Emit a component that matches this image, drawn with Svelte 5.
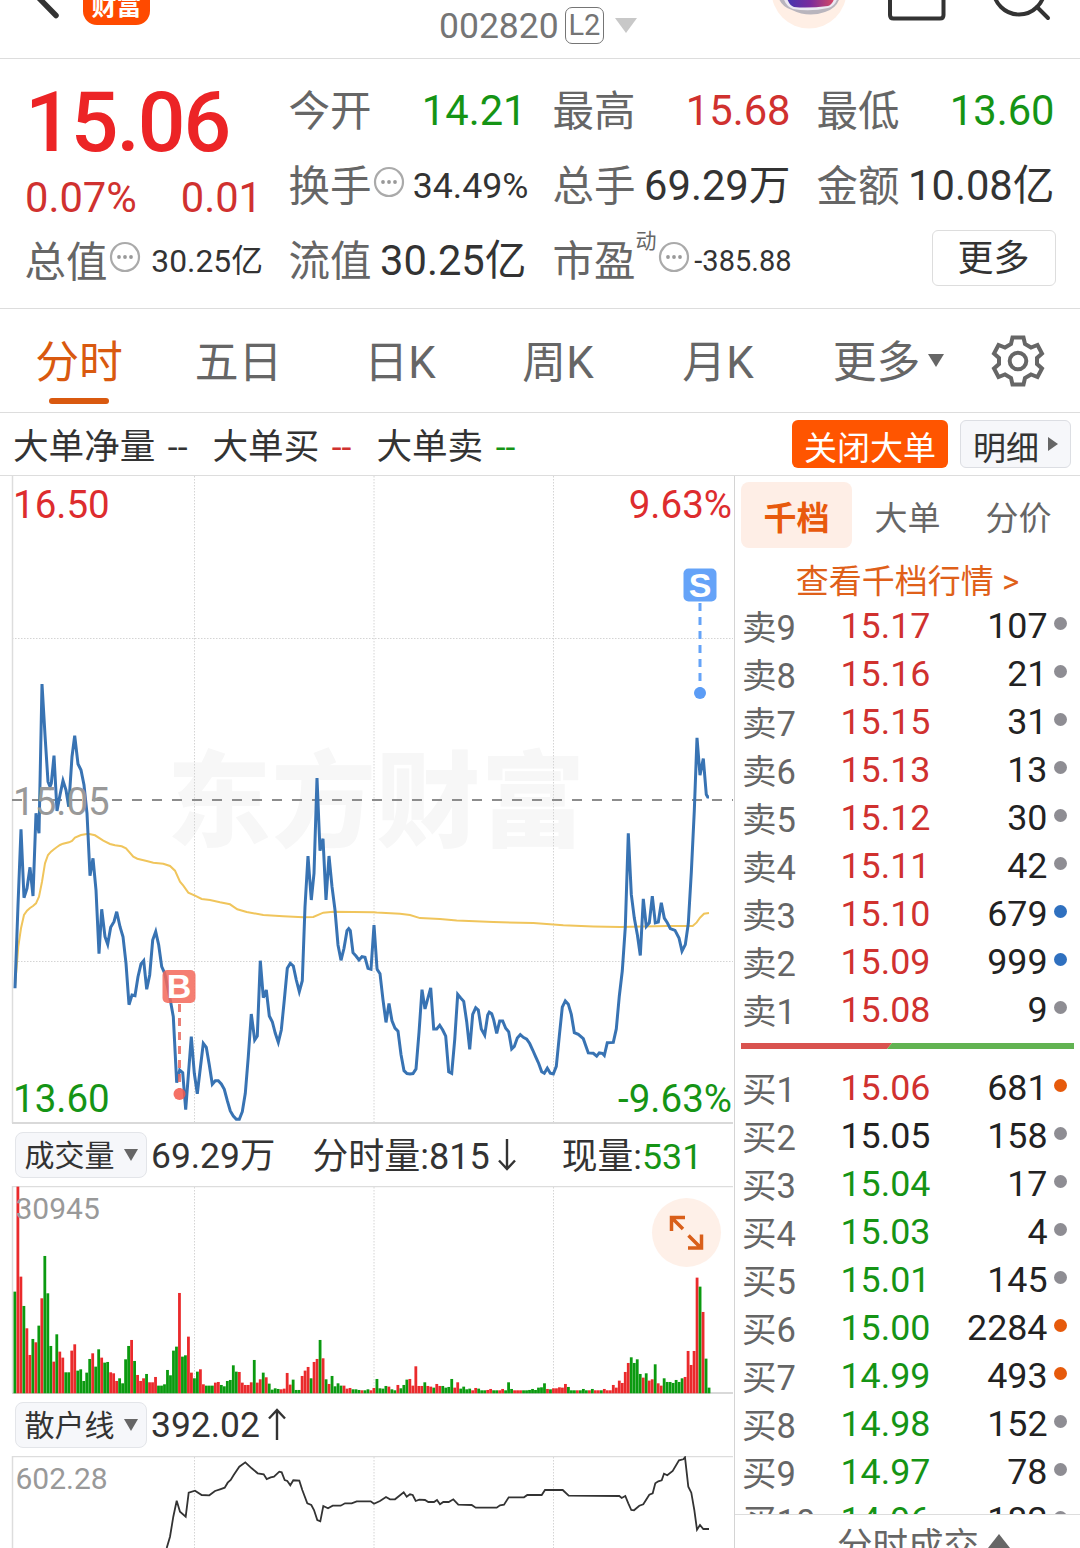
<script>
	const asks = [
		['卖9', '15.17', 107, 'gray'],
		['卖8', '15.16', 21, 'gray'],
		['卖7', '15.15', 31, 'gray'],
		['卖6', '15.13', 13, 'gray'],
		['卖5', '15.12', 30, 'gray'],
		['卖4', '15.11', 42, 'gray'],
		['卖3', '15.10', 679, 'blue'],
		['卖2', '15.09', 999, 'blue'],
		['卖1', '15.08', 9, 'gray']
	];
	const bids = [
		['买1', '15.06', 681, 'orange'],
		['买2', '15.05', 158, 'gray'],
		['买3', '15.04', 17, 'gray'],
		['买4', '15.03', 4, 'gray'],
		['买5', '15.01', 145, 'gray'],
		['买6', '15.00', 2284, 'orange'],
		['买7', '14.99', 493, 'orange'],
		['买8', '14.98', 152, 'gray'],
		['买9', '14.97', 78, 'gray'],
		['买10', '14.96', 182, 'gray']
	];
	const preClose = 15.05;

	function tone(price) {
		const p = Number(price);
		if (p > preClose) return 'up';
		if (p < preClose) return 'down';
		return 'flat';
	}

	// Scale a raw "x,y x,y" trace into chart coordinates
	function trace(raw, x0, y0, ky) {
		return raw
			.split(' ')
			.map((p) => {
				const [x, y] = p.split(',').map(Number);
				return (x0 + x / 3).toFixed(1) + ',' + (y0 + y / ky).toFixed(1);
			})
			.join(' ');
	}

	const priceAm =
		'45,1045 54,795 63,568 72,773 81,745 90,682 99,768 108,520 117,580 126,132 135,285 144,425 150,440 154,430 162,347 171,513 180,465 189,422 198,450 206,500 216,350 224,287 234,372 243,390 252,435 261,520 270,707 279,655 288,750 297,941 305,808 315,890 323,913 332,862 342,845 350,815 360,860 369,890 378,970 387,1094 396,1065 405,1067 414,1010 423,972 431,962 440,1048 449,1005 458,900 467,875 476,915 485,980 494,1000 511,1080 520,1130 530,1328 539,1290 548,1298 557,1409 574,1190 583,1300 592,1361 601,1285 610,1210 619,1222 628,1275 637,1333 646,1322 655,1322 664,1332 673,1348 682,1382 691,1413 700,1428 709,1438 718,1438 727,1415 736,1360 745,1250 754,1122 764,1200 772,1188 781,962 790,1073 799,1050 808,1128 817,1145 826,1180 835,1207 844,1170 853,1080 862,985 871,970 880,978 889,1020 898,1055 907,1022 915,800 924,648 934,780 942,700 951,414 960,632 969,596 978,780 987,648 996,740 1005,810 1014,915 1023,961 1032,925 1041,872 1046,866 1051,872 1059,938 1068,948 1077,960 1086,950 1095,952 1104,985 1113,988 1122,855 1131,985';
	const pricePm =
		'52,1127 60,1138 69,1210 78,1272 87,1220 96,1268 105,1288 114,1296 123,1360 132,1405 141,1413 150,1414 159,1413 168,1400 177,1300 186,1182 195,1235 212,1177 221,1290 230,1290 239,1280 248,1293 257,1310 266,1408 275,1412 284,1320 293,1195 302,1205 311,1214 320,1270 329,1346 338,1250 347,1232 355,1238 364,1290 374,1307 383,1252 388,1244 395,1248 401,1265 410,1302 419,1268 428,1268 437,1288 446,1298 455,1345 463,1338 472,1315 481,1306 490,1313 500,1318 509,1330 518,1348 527,1367 536,1385 545,1408 553,1412 562,1398 571,1412 580,1414 589,1393 598,1310 607,1230 616,1213 625,1222 634,1250 643,1300 655,1305 670,1317 685,1356 700,1357 710,1365 718,1356 727,1357 733,1363 742,1328 760,1327 769,1290 778,1200 787,1130 796,1010 805,752 814,920 823,985 832,1030 841,1088 850,932 859,1008 868,998 877,925 886,998 895,996 904,943 913,985 922,998 931,1014 945,1019 957,1040 966,1076 976,1058 985,1000 994,860 1003,690 1011,489 1020,592 1030,546 1039,645 1043,652 1047,652';
	const avgAm =
		'45,1040 55,920 63,865 72,825 81,812 90,804 99,798 108,790 117,770 126,725 135,670 144,645 153,635 162,628 171,621 180,615 189,611 207,607 216,603 225,593 243,585 265,581 285,586 310,602 330,612 345,616 365,619 378,625 400,650 412,656 440,663 460,668 490,671 510,678 525,692 540,725 550,737 565,758 585,767 605,777 630,780 660,787 690,793 712,808 740,816 790,825 850,829 910,832 940,831 970,818 1000,815 1120,817';
	const avgPm =
		'50,970 120,973 150,977 180,985 240,988 290,992 400,996 520,999 610,1005 700,1008 780,1010 850,1008 920,1007 998,1007 1010,997 1020,984 1032,973 1047,971';
	const retailAm =
		'500,1284 510,1250 520,1190 530,1142 540,1175 557,1190 566,1118 585,1112 605,1125 628,1126 645,1113 660,1108 674,1103 683,1088 692,1080 701,1065 718,1040 736,1027 755,1045 773,1060 791,1063 800,1077 812,1072 822,1070 838,1055 845,1057 854,1080 862,1083 871,1096 880,1081 898,1082 907,1110 922,1150 934,1155 942,1170 952,1200 961,1204 970,1158 984,1165 998,1157 1022,1157 1035,1150 1055,1150 1070,1144 1080,1144';
	const retailPm =
		'32,1144 42,1151 60,1143 78,1131 90,1138 105,1138 131,1117 140,1130 150,1123 158,1125 167,1143 178,1139 195,1140 205,1146 222,1146 231,1140 240,1153 250,1146 266,1146 280,1138 295,1154 335,1155 347,1163 410,1163 420,1156 432,1154 446,1132 492,1132 502,1125 545,1125 555,1110 608,1110 626,1127 778,1128 785,1134 796,1128 805,1150 814,1170 822,1171 838,1157 850,1153 868,1124 878,1120 886,1090 895,1084 905,1081 912,1061 922,1066 938,1053 957,1021 970,1018 975,1012 985,1100 994,1118 1003,1170 1011,1229 1020,1215 1030,1227 1047,1227';

	const priceLine = trace(priceAm, 0, 640, 3) + ' ' + trace(pricePm, 360, 560, 2.751);
	const avgLine = trace(avgAm, 0, 640, 3) + ' ' + trace(avgPm, 360, 560, 2.751);
	const retailLine = trace(retailAm, 0, 1120, 3) + ' ' + trace(retailPm, 360, 1120, 3);

	// one bar per minute, r = rising, g = falling
	const volumes =
		'g305 r620 r350 g262 r195 r115 g163 r153 g203 r285 g412 g300 g142 r95 g177 r125 r107 g63 g63 r128 r147 g68 g72 g37 g62 g103 r120 g80 g132 r107 g92 g94 r63 r60 r37 g45 g30 g102 g142 r160 g97 r55 r37 r45 g58 r33 r33 r49 g23 g23 g27 g70 g54 g128 g140 r301 g110 g114 r170 r62 g45 g65 r72 r27 g23 g23 g23 r32 r34 g25 g21 g37 g40 g84 g65 r64 r32 r25 r25 r33 g100 r32 r42 g62 r48 g29 g11 g15 g13 r12 r14 r61 r26 g41 g10 g10 r52 r68 r79 g45 r94 r103 g160 r105 g42 r28 g52 g21 g30 g23 r23 r14 r16 g12 g12 g10 r9 g9 g12 ' +
		'r9 r16 g43 g15 g14 g22 r20 g12 g9 r25 g15 g25 g41 r43 r23 r81 r22 r22 g33 r22 r20 g17 r28 r22 g22 g17 g19 g43 r17 r33 g14 g20 g12 g14 r9 r16 g14 g9 g9 r10 r13 g9 g9 r9 r13 g9 g33 g13 r9 r9 r9 g9 g9 g10 g13 g10 g17 g18 g30 r13 g12 r15 r15 r18 r17 r28 g19 g9 g9 r9 g9 g13 g9 r9 g13 r9 r9 g9 r13 r9 r9 r25 r17 r38 r31 r64 r91 g108 g91 g102 g58 r47 g60 r38 r42 g87 r30 r23 g45 g34 g34 g31 g40 g34 g45 r49 r127 r85 r127 r347 g320 r244 g104 g17';
	const bars = volumes.split(' ').map((v, i) => ({
		x: 13.5 + i * 2.992,
		h: Number(v.slice(1)) / 3,
		color: v[0] === 'r' ? '#ea2a2c' : '#0b9a10'
	}));

	const gridX = [194.5, 374, 553.5];
</script>

{#snippet info()}
	<svg class="info" width="32" height="32" viewBox="0 0 32 32">
		<circle cx="16" cy="16" r="14" fill="none" stroke="#aaa" stroke-width="2.2" />
		<circle cx="10" cy="16" r="1.9" fill="#999" />
		<circle cx="16" cy="16" r="1.9" fill="#999" />
		<circle cx="22" cy="16" r="1.9" fill="#999" />
	</svg>
{/snippet}

{#snippet row([label, price, qty, dot])}
	<div class="row">
		<span class="label">{label}</span>
		<span class="price {tone(price)}">{price}</span>
		<span class="qty">{qty}</span>
		<i class="dot {dot}"></i>
	</div>
{/snippet}

<div class="page">
	<header>
		<div class="left">
			<svg width="83" height="58" viewBox="0 0 83 58">
				<path d="M33-8 56 15.500" fill="none" stroke="#333" stroke-width="5.500" stroke-linecap="round" />
			</svg>
			<div class="logo">财富</div>
		</div>
		<div class="code">
			<span>002820</span>
			<span class="level">L2</span>
			<svg width="22" height="16" viewBox="0 0 22 16"><path d="M0 0h22L11 15z" fill="#c8c8c8" /></svg>
		</div>
		<svg class="actions" width="443" height="58" viewBox="637 0 443 58">
			<defs>
				<linearGradient id="visor" x1="0" x2="1" y1="0" y2="0">
					<stop offset="0" stop-color="#4136b0" />
					<stop offset="0.5" stop-color="#7a2a9c" />
					<stop offset="1" stop-color="#d94a62" />
				</linearGradient>
			</defs>
			<circle cx="809" cy="-9" r="37.500" fill="#ffefe5" />
			<path d="M778-4Q781 7 792 10Q808 18 825 12Q838 8 840-4z" fill="#b9b5bd" />
			<path d="M783-4Q785 6 793 9Q810 12 828 8Q836 6 838-4z" fill="#ece9f2" />
			<path d="M786-6Q788 5 794 7Q808 8.500 828 6Q834 4 835-6z" fill="url(#visor)" />
			<path d="M890-6V15q0 3.500 3.500 3.500h46.500q3.500 0 3.500-3.500V-6" fill="none" stroke="#333" stroke-width="4" />
			<circle cx="1019" cy="-11" r="25.500" fill="none" stroke="#333" stroke-width="4" />
			<path d="M1037 7 1048 18" stroke="#333" stroke-width="4" stroke-linecap="round" />
		</svg>
	</header>

	<section class="quote">
		<div class="last">
			<div class="big">15.06</div>
			<div class="pair change"><span>0.07%</span><span>0.01</span></div>
			<div class="pair cap"><span class="name">总值{@render info()}</span><span class="small">30.25亿</span></div>
		</div>
		<div class="grid">
			<div class="pair"><span class="name">今开</span><span class="down">14.21</span></div>
			<div class="pair"><span class="name">最高</span><span class="up">15.68</span></div>
			<div class="pair"><span class="name">最低</span><span class="down">13.60</span></div>
			<div class="pair"><span class="name">换手{@render info()}</span><span class="mid">34.49%</span></div>
			<div class="pair"><span class="name">总手</span><span>69.29万</span></div>
			<div class="pair"><span class="name">金额</span><span>10.08亿</span></div>
			<div class="pair"><span class="name">流值</span><span>30.25亿</span></div>
			<div class="pair"><span class="name">市盈<sup>动</sup>{@render info()}</span><span class="tiny">-385.88</span></div>
			<div class="pair end"><button class="more">更多</button></div>
		</div>
	</section>

	<nav>
		<span class="active">分时</span>
		<span>五日</span>
		<span>日K</span>
		<span>周K</span>
		<span>月K</span>
		<span>更多<svg class="caret" width="16" height="13" viewBox="0 0 16 13"><path d="M0 0h16L8 13z" fill="#666" /></svg></span>
		<svg class="gear" width="54" height="54" viewBox="-27 -27 54 54" fill="none" stroke="#666" stroke-width="4">
			<path d="M-5.500-23.500H5.500L7-17L13-13.500L19.500-16L24-7.500L19-3V3L24 7.500L19.500 16L13 13.500L7 17L5.500 23.500H-5.500L-7 17L-13 13.500L-19.500 16L-24 7.500L-19 3V-3L-24-7.500L-19.500-16L-13-13.500L-7-17z" />
			<circle r="8.300" />
		</svg>
	</nav>

	<div class="orders">
		<span>大单净量 <b>--</b></span>
		<span>大单买 <b class="up">--</b></span>
		<span>大单卖 <b class="down">--</b></span>
		<button class="close">关闭大单</button>
		<button class="detail">明细<svg width="10" height="14" viewBox="0 0 10 14"><path d="M0 0 10 7 0 14z" fill="#666" /></svg></button>
	</div>

	<main>
		<div class="charts">
			<svg width="734" height="648" viewBox="0 476 734 648">
				<text class="mark" x="167" y="839" textLength="418">东方财富</text>
				<g class="grid-lines">
					{#each gridX as x}
						<line x1={x} x2={x} y1="476" y2="1123" />
					{/each}
					<line x1="12" x2="733" y1="638.5" y2="638.5" />
					<line x1="12" x2="733" y1="961.5" y2="961.5" />
				</g>
				<path d="M12.500 476V1123" stroke="#ddd" stroke-width="1.500" />
				<path d="M12 1123H733" stroke="#d9d9d9" stroke-width="2" />
				<path d="M12 800H733" stroke="#8c8c8c" stroke-width="2" stroke-dasharray="10 10" />
				<polyline points={avgLine} fill="none" stroke="#f0c55c" stroke-width="2" />
				<polyline points={priceLine} fill="none" stroke="#3873b3" stroke-width="3" />
				<text class="axis up" x="13" y="518">16.50</text>
				<text class="axis up" x="732" y="518" text-anchor="end">9.63%</text>
				<text class="axis muted" x="13" y="815">15.05</text>
				<text class="axis down" x="13" y="1112">13.60</text>
				<text class="axis down" x="732" y="1112" text-anchor="end">-9.63%</text>
				<g opacity="0.85">
					<rect x="162.500" y="970" width="33" height="33" rx="5" fill="#f4685a" />
					<path d="M179.500 1004V1092" stroke="#e8695f" stroke-width="3" stroke-dasharray="8 6" />
					<circle cx="179.500" cy="1094" r="6" fill="#f4594c" />
				</g>
				<text class="flag" x="179" y="998">B</text>
				<rect x="683.500" y="568.500" width="33" height="33" rx="5" fill="#65a3f8" />
				<path d="M700 603V692" stroke="#65a3f8" stroke-width="3" stroke-dasharray="8 6" />
				<circle cx="700" cy="693" r="6" fill="#5b9cf5" />
				<text class="flag" x="700" y="597">S</text>
			</svg>

			<div class="toolbar">
				<button class="pill">成交量<svg width="14" height="12" viewBox="0 0 14 12"><path d="M0 0h14L7 12z" fill="#666" /></svg></button>
				<span class="value cjk">69.29万</span>
				<span class="minute cjk">分时量:815<svg width="24" height="34" viewBox="0 0 24 34"><path d="M10 1V31M2 22.500 10 31 18 22.500" fill="none" stroke="#333" stroke-width="2.400" /></svg></span>
				<span class="now cjk">现量:<em class="down">531</em></span>
			</div>

			<svg width="734" height="208" viewBox="0 1186 734 208">
				<g class="grid-lines">
					{#each gridX as x}
						<line x1={x} x2={x} y1="1187" y2="1393" />
					{/each}
				</g>
				<path d="M12.500 1393V1186.500H733" fill="none" stroke="#ddd" stroke-width="1.500" />
				<path d="M12 1393H733" stroke="#d9d9d9" stroke-width="2" />
				{#each bars as b}
					<rect x={b.x} y={1393.3 - b.h} width="2.800" height={b.h} fill={b.color} />
				{/each}
				<text class="axis muted note" x="15.500" y="1219">30945</text>
				<circle cx="686.500" cy="1232.500" r="34.500" fill="#fef0e8" />
				<path d="M671.500 1231V1217.500H685M672 1218 683 1229M688.500 1235.500 701 1248M688 1248H701.500V1234.500" fill="none" stroke="#d95f1a" stroke-width="3.500" />
			</svg>

			<div class="toolbar second">
				<button class="pill">散户线<svg width="14" height="12" viewBox="0 0 14 12"><path d="M0 0h14L7 12z" fill="#666" /></svg></button>
				<span class="value">392.02<svg class="rise" width="26" height="34" viewBox="0 0 26 34"><path d="M16 32V2M8 10.500 16 2 24 10.500" fill="none" stroke="#333" stroke-width="2.400" /></svg></span>
			</div>

			<svg width="734" height="92" viewBox="0 1456 734 92">
				<g class="grid-lines">
					{#each gridX as x}
						<line x1={x} x2={x} y1="1457" y2="1548" />
					{/each}
				</g>
				<path d="M12.500 1548V1456.500H733" fill="none" stroke="#ddd" stroke-width="1.500" />
				<polyline points={retailLine} fill="none" stroke="#333" stroke-width="1.800" />
				<text class="axis muted note" x="15.500" y="1489">602.28</text>
			</svg>
		</div>

		<aside>
			<div class="book-tabs">
				<span class="active">千档</span>
				<span>大单</span>
				<span>分价</span>
			</div>
			<div class="link">查看千档行情 &gt;</div>
			{#each asks as item}
				{@render row(item)}
			{/each}
			<svg class="ratio" width="333" height="6" viewBox="0 0 333 6">
				<path d="M0 0H151L146 6H0z" fill="#d9534f" />
				<path d="M151 0H333V6H146z" fill="#62b352" />
			</svg>
			<div class="bids">
				{#each bids as item}
					{@render row(item)}
				{/each}
			</div>
			<div class="footer">分时成交<svg width="22" height="14" viewBox="0 0 22 14"><path d="M0 14h22L11 0z" fill="#666" /></svg></div>
		</aside>
	</main>
</div>

<style>
	:global(body) {
		margin: 0;
		background: #fff;
	}

	.page {
		width: 1080px;
		height: 1548px;
		overflow: hidden;
		display: flex;
		flex-direction: column;
		background: #fff;
		color: #333;
		font-family: Roboto, 'Noto Sans CJK SC', sans-serif;
		white-space: nowrap;
	}

	svg {
		display: block;
		flex: none;
	}

	button {
		padding: 0;
		font: inherit;
		color: inherit;
		box-sizing: border-box;
		display: flex;
		align-items: center;
		justify-content: center;
	}

	.up {
		color: #d0312f;
		fill: #dd2c2e;
	}

	.down {
		color: #159415;
		fill: #159415;
	}

	header {
		height: 58px;
		flex: none;
		display: grid;
		grid-template-columns: 439px 198px 443px;
		overflow: hidden;
		border-bottom: 1px solid #ddd;
	}

	.left {
		display: flex;
		height: 58px;
	}

	.logo {
		width: 67px;
		height: 67px;
		margin-top: -42px;
		border-radius: 14px;
		background: #ff4a00;
		color: #fff;
		font-size: 25px;
		font-weight: 700;
		line-height: 26px;
		text-align: center;
		padding-top: 36px;
		box-sizing: border-box;
	}

	.code {
		display: flex;
		align-items: center;
		height: 51px;
		font-size: 35.5px;
		color: #757575;
	}

	.level {
		width: 40px;
		height: 37px;
		margin: 0 11px 0 6px;
		box-sizing: border-box;
		border: 1.5px solid #757575;
		border-radius: 7px;
		font-size: 29px;
		line-height: 35px;
		text-align: center;
	}

	.quote {
		height: 249px;
		flex: none;
		box-sizing: content-box;
		border-bottom: 1px solid #ddd;
		padding: 0 24px 0 25px;
		display: flex;
		gap: 27px;
		font-size: 41.7px;
	}

	.last {
		width: 237px;
		padding-top: 23px;
	}

	.big {
		font-size: 84px;
		font-weight: 500;
		line-height: 82px;
		letter-spacing: -2px;
		color: #ec2426;
	}

	.change {
		height: 68px;
		color: #d0312f;
	}

	.cap {
		height: 58px;
	}

	.grid {
		flex: 1;
		padding-top: 14px;
		display: grid;
		grid-template-columns: repeat(3, 237.5px);
		grid-auto-rows: 75px;
		column-gap: 26.5px;
		align-content: start;
	}

	.pair {
		display: flex;
		align-items: center;
		justify-content: space-between;
		line-height: 50px;
	}

	.pair.end {
		justify-content: flex-end;
	}

	.name {
		display: flex;
		align-items: center;
		margin: 3px 0 0 -0.5px;
		font-size: 41.5px;
		color: #666;
	}

	.info {
		margin: -11px 0 0 1px;
	}

	sup {
		font-size: 21px;
		line-height: 22px;
		margin: -43px 0 0 0;
	}

	.mid {
		margin-right: -2px;
		font-size: 35.7px;
	}

	.small {
		margin-right: -1px;
		font-size: 31.8px;
	}

	.tiny {
		margin-right: -1px;
		font-size: 29px;
	}

	.more {
		width: 124px;
		height: 56px;
		margin: -5px -1px 0 0;
		padding-top: 1px;
		background: #fff;
		border: 1px solid #ddd;
		border-radius: 6px;
		font-size: 36px;
	}

	nav {
		height: 103px;
		flex: none;
		display: grid;
		grid-template-columns: 158px 161px 162px 154px 166px 175px 84px;
		align-items: center;
		justify-items: center;
		border-bottom: 1px solid #ddd;
		font-size: 43.8px;
		color: #666;
	}

	nav span {
		height: 103px;
		line-height: 103px;
		padding-top: 5px;
		box-sizing: border-box;
		position: relative;
		display: flex;
		align-items: center;
	}

	nav .active {
		color: #d9590f;
	}

	nav .active::after {
		content: '';
		position: absolute;
		left: 14px;
		bottom: 8px;
		width: 60px;
		height: 6px;
		border-radius: 3px;
		background: #d9590f;
	}

	.caret {
		margin: -5px 0 0 8px;
	}

	.orders {
		height: 62px;
		flex: none;
		display: flex;
		align-items: center;
		padding: 0 9px 0 13px;
		border-bottom: 1px solid #ddd;
		font-size: 35.6px;
	}

	.orders span {
		margin: -2px 25px 0 0;
		display: flex;
		align-items: baseline;
		gap: 12.5px;
	}

	.orders b {
		font-weight: 400;
	}

	.close {
		width: 156px;
		height: 48px;
		margin-left: auto;
		padding-top: 3px;
		border: 0;
		border-radius: 6px;
		background: #ff5500;
		color: #fff;
		font-size: 33px;
	}

	.detail {
		width: 111px;
		height: 48px;
		margin-left: 12px;
		padding-top: 3px;
		border: 1px solid #dcdee3;
		border-radius: 6px;
		background: #f6f7fa;
		font-size: 33px;
		gap: 9px;
	}

	.detail svg {
		margin-top: -4px;
	}

	main {
		flex: 1;
		min-height: 0;
		display: flex;
	}

	.charts {
		width: 734px;
		flex: none;
	}

	.grid-lines line {
		stroke: #d4d4d4;
		stroke-width: 1;
		stroke-dasharray: 1.5 1.5;
	}

	.mark {
		font-family: 'Noto Sans CJK SC', sans-serif;
		font-size: 104px;
		font-weight: 900;
		fill: #f7f7f7;
	}

	.axis {
		font-size: 38.5px;
	}

	.muted {
		fill: #999;
	}

	.note {
		font-size: 30px;
	}

	.flag {
		font-family: 'Liberation Sans', sans-serif;
		font-size: 34px;
		font-weight: 700;
		fill: #fff;
		text-anchor: middle;
	}

	.toolbar {
		height: 62px;
		box-sizing: border-box;
		padding-left: 15px;
		display: flex;
		align-items: center;
		font-size: 35.4px;
	}

	.toolbar span {
		display: flex;
		align-items: center;
	}

	.toolbar .cjk {
		align-items: baseline;
		margin-top: -5px;
	}

	.pill {
		width: 132px;
		height: 46px;
		padding-bottom: 5px;
		border: 1px solid #e3e5e9;
		border-radius: 8px;
		background: #f6f7fa;
		font-size: 30px;
		gap: 9px;
	}

	.pill svg {
		margin-top: 4px;
	}

	.value {
		margin-left: 4px;
	}

	.rise {
		margin-left: 1px;
	}

	.minute {
		margin-left: 37px;
		font-size: 36px;
	}

	.minute svg {
		margin-left: 7px;
		transform: translateY(3px);
	}

	.now {
		margin-left: 41px;
		font-size: 35.8px;
	}

	em {
		font-style: normal;
	}

	aside {
		flex: 1;
		border-left: 1px solid #d4d4d4;
		padding-left: 6px;
		display: flex;
		flex-direction: column;
	}

	.book-tabs {
		flex: none;
		height: 66px;
		margin-top: 6px;
		display: grid;
		grid-template-columns: repeat(3, 111px);
		line-height: 73px;
		font-size: 33px;
		text-align: center;
		color: #666;
	}

	.book-tabs span {
		height: 66px;
	}

	.book-tabs .active {
		border-radius: 8px;
		background: #feeee6;
		color: #e8590c;
		font-weight: 700;
	}

	.link {
		flex: none;
		height: 53px;
		line-height: 68px;
		width: 333px;
		text-align: center;
		font-size: 33px;
		color: #df6019;
	}

	.row {
		flex: none;
		height: 48px;
		box-sizing: border-box;
		display: grid;
		grid-template-columns: 98px 96px 111.5px 20px;
		align-items: center;
		padding: 2px 0 0 1px;
		font-size: 35.8px;
		line-height: 46px;
	}

	.label {
		font-size: 34.5px;
		color: #666;
		padding-top: 4px;
		line-height: 42px;
	}

	.price {
		padding-left: 0.5px;
	}

	.qty {
		text-align: right;
		color: #222;
	}

	.flat {
		color: #222;
	}

	.dot {
		width: 13px;
		height: 13px;
		margin: -5px 0 0 6.5px;
		border-radius: 50%;
	}

	.gray {
		background: #8e8d93;
	}

	.blue {
		background: #2f70bf;
	}

	.orange {
		background: #e65a0b;
	}

	.ratio {
		margin: 10px 0 14px;
	}

	.bids {
		height: 451px;
		flex: none;
		overflow: hidden;
	}

	.footer {
		flex: none;
		height: 55px;
		margin-left: -6px;
		padding-left: 102px;
		border-top: 1px solid #ddd;
		display: flex;
		align-items: center;
		gap: 9px;
		font-size: 35.5px;
		color: #666;
	}

	.footer svg {
		margin-top: -4px;
	}
</style>
